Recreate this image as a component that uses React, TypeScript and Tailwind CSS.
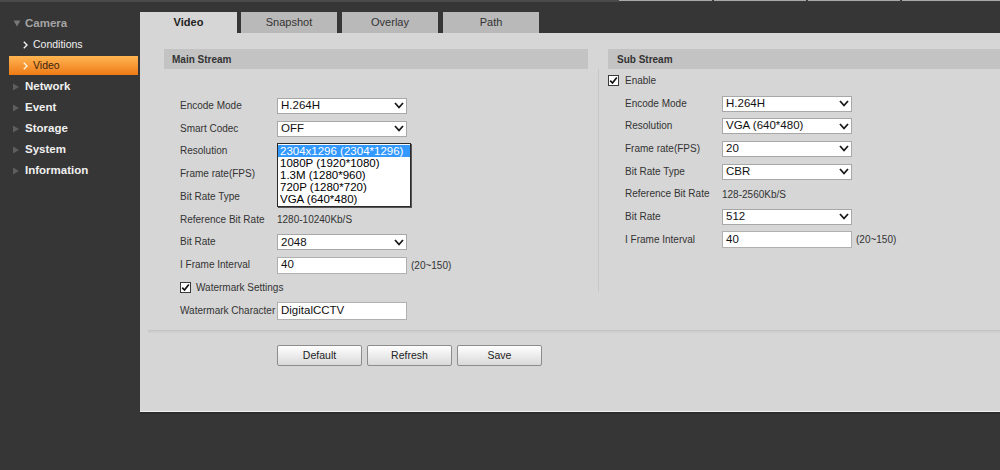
import React from "react";

const Chevron = () => (
  <svg width="10" height="7" viewBox="0 0 10 7" className="shrink-0">
    <polyline points="1,1 5,5.5 9,1" fill="none" stroke="#1a1a1a" strokeWidth="1.8" />
  </svg>
);

const Sel = ({ value }: { value: string }) => (
  <div className="flex h-[16px] w-[130px] shrink-0 items-center justify-between border border-[#a8a8a8] bg-white pl-[3px] pr-[2px] text-[11.5px] leading-none text-[#111]">
    <span>{value}</span>
    <Chevron />
  </div>
);

const Inp = ({ value, h = "h-[17px]" }: { value: string; h?: string }) => (
  <div className={`flex ${h} w-[130px] shrink-0 items-center border border-[#b0b0b0] bg-white pl-[3px] text-[11.5px] leading-none text-[#111]`}>
    {value}
  </div>
);

const Check = () => (
  <div className="flex h-[11px] w-[11px] shrink-0 items-center justify-center border border-[#3a3a3a] bg-white">
    <svg width="9" height="9" viewBox="0 0 9 9">
      <polyline points="1.2,4.6 3.5,7 7.8,1.5" fill="none" stroke="#111" strokeWidth="1.7" />
    </svg>
  </div>
);

const Row = ({ label, children, h = "h-[22.75px]" }: { label: string; children?: React.ReactNode; h?: string }) => (
  <div className={`relative flex ${h} shrink-0 items-center`}>
    <div className="w-[97px] shrink-0 text-[10px] leading-none text-[#333]">{label}</div>
    {children}
  </div>
);

const TriRight = () => (
  <svg width="8" height="8" viewBox="0 0 8 8" className="shrink-0">
    <polygon points="1,0.5 7,4 1,7.5" fill="#5e5e5e" />
  </svg>
);

const ChevSmall = ({ color }: { color: string }) => (
  <svg width="5" height="8" viewBox="0 0 5 8" className="shrink-0">
    <polyline points="0.8,0.8 4,4 0.8,7.2" fill="none" stroke={color} strokeWidth="1.4" />
  </svg>
);

export default function App() {
  const font = "font-['Liberation_Sans',Arial,sans-serif]";
  const navItems = ["Network", "Event", "Storage", "System", "Information"];
  const resOptions = [
    "2304x1296 (2304*1296)",
    "1080P (1920*1080)",
    "1.3M (1280*960)",
    "720P (1280*720)",
    "VGA (640*480)",
  ];
  return (
    <div className={`${font} flex h-[470px] w-[1000px] flex-col overflow-hidden bg-[#363636]`}>
      {/* top strip */}
      <div className="flex h-[2px] shrink-0">
        <div className="h-[2px] w-[619px] bg-[#4b4b4b]" />
        <div className="flex h-[2px] flex-1 gap-[2px] bg-[#3a3a3a]">
          <div className="h-[1px] w-[93px] bg-[#a9a9a9]" />
          <div className="h-[1px] w-[92px] bg-[#a9a9a9]" />
          <div className="h-[1px] w-[92px] bg-[#a9a9a9]" />
          <div className="h-[1px] flex-1 bg-[#a9a9a9]" />
        </div>
      </div>

      <div className="flex flex-1">
        {/* sidebar */}
        <div className="flex w-[140px] shrink-0 flex-col pt-[11px]">
          <div className="flex h-[21px] items-center gap-[4px] pl-[13px]">
            <svg width="8" height="7" viewBox="0 0 8 7">
              <polygon points="0.5,0.5 7.5,0.5 4,6.5" fill="#777" />
            </svg>
            <span className="text-[11.5px] font-bold text-[#a4a4a4]">Camera</span>
          </div>
          <div className="flex h-[21px] items-center gap-[5px] pl-[23px]">
            <ChevSmall color="#f2f2f2" />
            <span className="text-[10.5px] text-[#f0f0f0]">Conditions</span>
          </div>
          <div className="flex h-[21px] items-center">
            <div className="ml-[9px] flex h-[19px] w-[129px] items-center gap-[5px] bg-gradient-to-b from-[#ffb550] to-[#ee7a10] pl-[14px]">
              <ChevSmall color="#fff3d8" />
              <span className="text-[10.5px] text-[#3a2410]">Video</span>
            </div>
          </div>
          {navItems.map((n) => (
            <div key={n} className="flex h-[21px] items-center gap-[5px] pl-[12px]">
              <TriRight />
              <span className="text-[11.5px] font-bold text-[#f0f0f0]">{n}</span>
            </div>
          ))}
        </div>

        {/* main */}
        <div className="flex flex-1 flex-col pt-[10px]">
          {/* tabs */}
          <div className="flex h-[21px] shrink-0 text-[11px] text-[#333]">
            <div className="flex w-[97px] items-center justify-center bg-[#d6d6d6] font-bold text-[#222]">Video</div>
            <div className="ml-[4px] flex w-[96px] items-center justify-center bg-[#b9b9b9]">Snapshot</div>
            <div className="ml-[5px] flex w-[96px] items-center justify-center bg-[#b9b9b9]">Overlay</div>
            <div className="ml-[5px] flex w-[96px] items-center justify-center bg-[#b9b9b9]">Path</div>
          </div>

          {/* panel */}
          <div className="flex h-[379px] shrink-0 flex-col border-b border-[#eeeeee] bg-[#d6d6d6] pl-[8px] pt-[16px]">
            <div className="ml-[16px] flex shrink-0 items-start">
              {/* main stream */}
              <div className="flex w-[424px] shrink-0 flex-col">
                <div className="flex h-[20px] shrink-0 items-center bg-[#c3c3c3] pl-[8px] text-[10px] font-bold text-[#333]">
                  Main Stream
                </div>
                <div className="flex flex-col pl-[16px] pt-[25.5px]">
                  <Row label="Encode Mode"><Sel value="H.264H" /></Row>
                  <Row label="Smart Codec"><Sel value="OFF" /></Row>
                  <Row label="Resolution">
                    <Sel value="" />
                    <div className="absolute left-[97px] top-[3px] z-10 flex h-[64px] w-[134px] flex-col border border-[#2a2a2a] bg-white pt-[1px] text-[11.5px] text-black shadow-[1px_1px_0_#555]">
                      {resOptions.map((o, i) => (
                        <div
                          key={o}
                          className={`h-[12px] pl-[2px] leading-[12px] ${i === 0 ? "bg-[#3399ff] text-white" : ""}`}
                        >
                          {o}
                        </div>
                      ))}
                    </div>
                  </Row>
                  <Row label="Frame rate(FPS)"><Sel value="" /></Row>
                  <Row label="Bit Rate Type"><Sel value="" /></Row>
                  <Row label="Reference Bit Rate">
                    <span className="text-[10px] text-[#333]">1280-10240Kb/S</span>
                  </Row>
                  <Row label="Bit Rate"><Sel value="2048" /></Row>
                  <Row label="I Frame Interval">
                    <Inp value="40" />
                    <span className="ml-[4px] text-[10px] text-[#333]">(20~150)</span>
                  </Row>
                  <div className="flex h-[22.75px] shrink-0 items-center gap-[5px]">
                    <Check />
                    <span className="text-[10px] text-[#333]">Watermark Settings</span>
                  </div>
                  <Row label="Watermark Character">
                    <Inp value="DigitalCCTV" h="h-[18px]" />
                  </Row>
                </div>
              </div>

              {/* sub stream */}
              <div className="ml-[10px] flex flex-1 flex-col">
                <div className="ml-[10px] flex h-[20px] shrink-0 items-center bg-[#c3c3c3] pl-[9px] text-[10px] font-bold text-[#333]">
                  Sub Stream
                </div>
                <div className="flex h-[223px] shrink-0 flex-col border-l border-[#c8c8c8] pl-[9px]">
                  <div className="flex h-[22.7px] shrink-0 items-center gap-[6px]">
                    <Check />
                    <span className="text-[10px] text-[#333]">Enable</span>
                  </div>
                  <div className="flex flex-col pl-[17px] pt-[0.5px]">
                    <Row label="Encode Mode" h="h-[22.7px]"><Sel value="H.264H" /></Row>
                    <Row label="Resolution" h="h-[22.7px]"><Sel value="VGA (640*480)" /></Row>
                    <Row label="Frame rate(FPS)" h="h-[22.7px]"><Sel value="20" /></Row>
                    <Row label="Bit Rate Type" h="h-[22.7px]"><Sel value="CBR" /></Row>
                    <Row label="Reference Bit Rate" h="h-[22.7px]">
                      <span className="text-[10px] text-[#333]">128-2560Kb/S</span>
                    </Row>
                    <Row label="Bit Rate" h="h-[22.7px]"><Sel value="512" /></Row>
                    <Row label="I Frame Interval" h="h-[22.7px]">
                      <Inp value="40" />
                      <span className="ml-[4px] text-[10px] text-[#333]">(20~150)</span>
                    </Row>
                  </div>
                </div>
              </div>
            </div>

            {/* separator */}
            <div className="mt-[8px] h-[3px] shrink-0 border-t border-[#c4c4c4] bg-[#cfcfcf]" />

            {/* buttons */}
            <div className="ml-[129px] mt-[12px] flex shrink-0 gap-[5px]">
              {["Default", "Refresh", "Save"].map((b) => (
                <div
                  key={b}
                  className="flex h-[21px] w-[85px] items-center justify-center rounded-[2px] border border-[#8c8c8c] bg-gradient-to-b from-[#ffffff] to-[#d9d9d9] text-[10.5px] text-[#222]"
                >
                  {b}
                </div>
              ))}
            </div>
          </div>
          <div className="h-[2px] bg-[#2c2c2c]" />
        </div>
      </div>
    </div>
  );
}
